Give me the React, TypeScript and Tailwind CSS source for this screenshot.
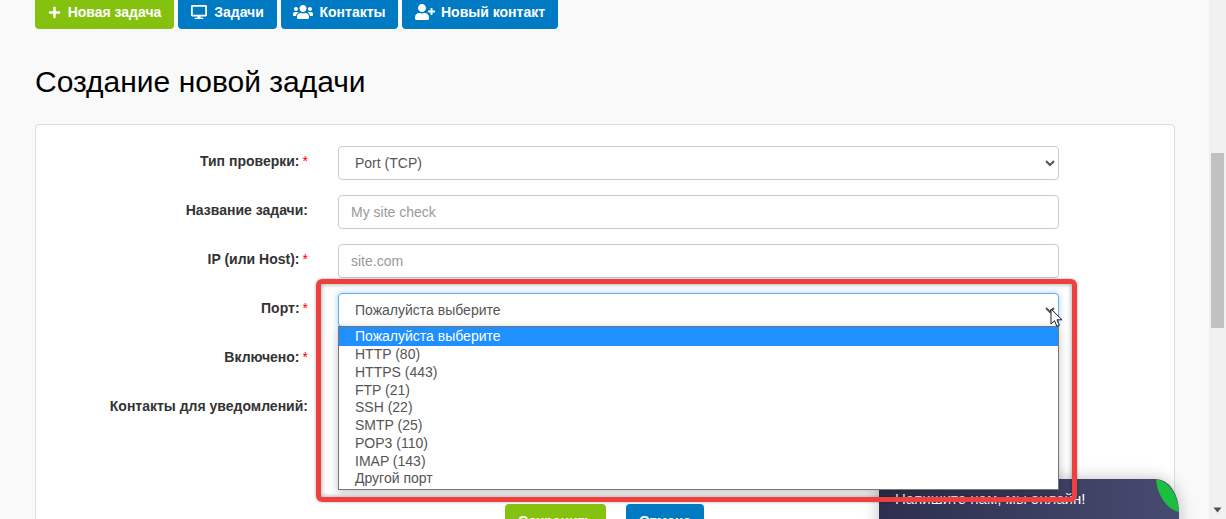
import React from 'react';
import { FaPlus, FaDesktop, FaUsers, FaUserPlus } from 'react-icons/fa';

const ports = ['HTTP (80)', 'HTTPS (443)', 'FTP (21)', 'SSH (22)', 'SMTP (25)', 'POP3 (110)', 'IMAP (143)', 'Другой порт'];

const Required = () => <span className="ml-[3px] font-normal text-[#ff0000]">*</span>;

const Row = ({ label, required, children }: { label: string; required?: boolean; children: React.ReactNode }) => (
  <div className="mb-[15px] flex">
    <label className="w-[272px] pt-[5px] text-right text-sm leading-[20px] font-bold text-[#333]">
      {label}
      {required && <Required />}
    </label>
    <div className="ml-[30px] w-[721px]">{children}</div>
  </div>
);

const fieldClass = 'block h-[34px] w-full rounded border border-[#ccc] bg-white px-3 text-sm text-[#555] placeholder:text-[#999]';

const App = () => {
  return (
    <div className="relative flex h-[519px] w-[1226px] overflow-hidden bg-[#f9f9f9] font-['Liberation_Sans',Arial,sans-serif]">
      <div className="w-[1209px] pl-[35px]">
        {/* Top buttons */}
        <div className="flex gap-1">
          <a className="flex h-[29px] w-[139px] items-center justify-center gap-[7px] rounded-b bg-[#84c20f] pb-[5px] text-sm font-bold text-white">
            <FaPlus className="h-[13px] w-[13px]" /> Новая задача
          </a>
          <a className="flex h-[29px] w-[99px] items-center justify-center gap-[7px] rounded-b bg-[#007bc3] pb-[5px] text-sm font-bold text-white">
            <FaDesktop className="h-[16px] w-[16px]" /> Задачи
          </a>
          <a className="flex h-[29px] w-[117px] items-center justify-center gap-[6px] rounded-b bg-[#007bc3] pb-[5px] text-sm font-bold text-white">
            <FaUsers className="h-[16px] w-[20px]" /> Контакты
          </a>
          <a className="flex h-[29px] w-[156px] items-center justify-center gap-[6px] rounded-b bg-[#007bc3] pb-[5px] text-sm font-bold text-white">
            <FaUserPlus className="h-[16px] w-[20px]" /> Новый контакт
          </a>
        </div>

        <h1 className="mt-[36px] mb-[25px] text-[30px] leading-[34px] font-normal text-black">Создание новой задачи</h1>

        {/* Form card */}
        <div className="h-[500px] w-[1140px] rounded border border-[#ddd] bg-white pt-[21px]">
          <Row label="Тип проверки:" required>
            <select className={fieldClass} defaultValue="tcp">
              <option value="tcp">Port (TCP)</option>
            </select>
          </Row>
          <Row label="Название задачи:">
            <input className={fieldClass} placeholder="My site check" />
          </Row>
          <Row label="IP (или Host):" required>
            <input className={fieldClass} placeholder="site.com" />
          </Row>
          <Row label="Порт:" required>
            <select className="block h-[34px] w-full rounded border border-[#66afe9] bg-white px-3 text-sm text-[#555] shadow-[0_0_6px_rgba(102,175,233,0.6)]">
              <option>Пожалуйста выберите</option>
            </select>
          </Row>
          <Row label="Включено:" required>
            <div className="h-[34px]" />
          </Row>
          <Row label="Контакты для уведомлений:">
            <div className="h-[98px]" />
          </Row>
          <div className="flex justify-center gap-5 pr-px">
            <a className="flex h-[34px] w-[101px] items-center justify-center rounded bg-[#84c20f] text-sm font-bold text-white">Сохранить</a>
            <a className="flex h-[34px] w-[78px] items-center justify-center rounded bg-[#007bc3] text-sm font-bold text-white">Отмена</a>
          </div>
        </div>
      </div>

      {/* Scrollbar */}
      <div className="relative w-[17px] bg-[#f1f1f1]">
        <div className="absolute top-[153px] left-[2px] h-[175px] w-[13px] bg-[#c1c1c1]" />
        <svg className="absolute top-[507px] left-[4px]" width="9" height="6" viewBox="0 0 9 6">
          <path d="M0.5 0.5h8L4.5 5.5z" fill="#505050" />
        </svg>
      </div>

      {/* Chat widget */}
      <div className="absolute top-[479px] left-[879px] h-[60px] w-[300px] overflow-hidden bg-gradient-to-r from-[#2e2f4e] to-[#464b70] pt-[10px] pl-[16px] text-[15px] leading-[20px] text-white shadow-[0_0_16px_rgba(0,0,0,0.25)] [border-top-right-radius:23px_33px]">
        Напишите нам, мы онлайн!
        <svg className="absolute top-0 right-0" width="23" height="33" viewBox="0 0 23 33">
          <path d="M0 0C13 2 22 16 23 33C10 30 1 15 0 0z" fill="#1bbf3f" />
        </svg>
      </div>

      {/* Open select list */}
      <div className="absolute top-[326px] left-[338px] w-[721px] border border-[#767676] bg-white pb-[2px] text-sm leading-[18px] text-[#555] shadow-[0_2px_8px_rgba(0,0,0,0.25)]">
        <div className="h-[18px] bg-[#1e90ff] pl-4 text-white shadow-[0_1px_0_#1e90ff]">Пожалуйста выберите</div>
        {ports.map((port) => (
          <div key={port} className="h-[17.75px] pl-4">
            {port}
          </div>
        ))}
      </div>

      {/* Red annotation */}
      <div className="pointer-events-none absolute top-[279px] left-[316px] h-[223px] w-[761px] rounded-md border-[5px] border-[#ef4040] shadow-[0_0_3px_rgba(0,0,0,0.35),inset_0_0_5px_rgba(0,0,0,0.4)]" />

      {/* Mouse cursor */}
      <svg className="absolute top-[308px] left-[1050px]" width="14" height="21" viewBox="0 0 14 21">
        <path d="M1 1v15l3.5-3.3 2.4 5.6 2.5-1-2.4-5.5H12z" fill="#fff" stroke="#1a1a2a" strokeWidth="1" />
      </svg>
    </div>
  );
};

export default App;
